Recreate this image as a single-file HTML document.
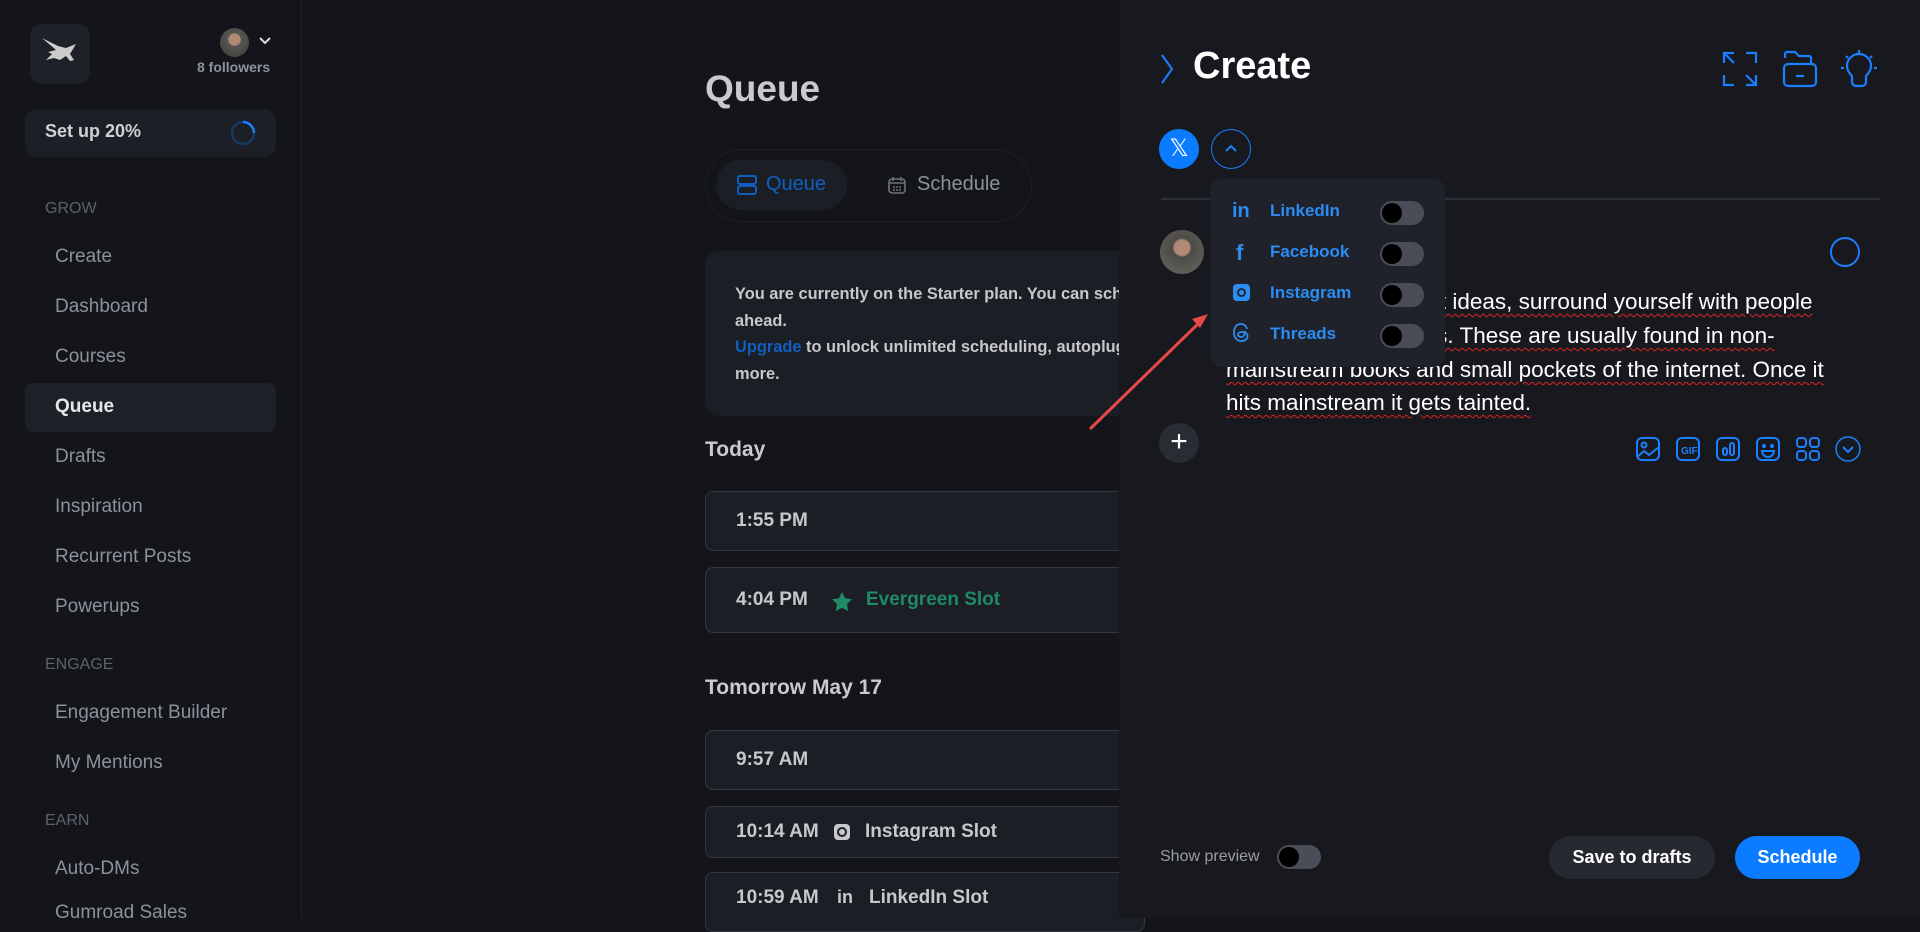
<!DOCTYPE html>
<html><head><meta charset="utf-8"><style>
*{box-sizing:border-box;margin:0;padding:0}
body{width:1920px;height:918px;overflow:hidden;background:#13151b;font-family:"Liberation Sans",sans-serif;position:relative;color:#c9cacd}
.abs{position:absolute}
.nav{position:absolute;left:55px;font-size:19px;color:#8d9199}
.sec{position:absolute;left:45px;font-size:16px;color:#5d616a}
.row{position:absolute;left:705px;width:440px;border:1px solid #34373f;border-radius:8px;background:#1c1e25}
.row span{position:absolute;left:30px;font-size:19px;font-weight:bold;color:#c7c8cb}
.tg{position:absolute;width:44px;height:24px;border-radius:12px;background:#4a4d58}
.tg:before{content:"";position:absolute;left:2px;top:2px;width:20px;height:20px;border-radius:50%;background:#000}
.dd{position:absolute;left:60px;font-size:17px;font-weight:bold;color:#2b8df2}
.ic{position:absolute;font-weight:bold;color:#2b8df2}
.pt{position:absolute;left:1226px;font-size:22.5px;color:#fff;text-decoration:underline wavy #d22;text-underline-offset:4px;text-decoration-thickness:1px;white-space:nowrap}
</style></head><body>
<!-- sidebar -->
<div class="abs" style="left:0;top:0;width:302px;height:918px;background:#13151b;border-right:1px solid #1f2128"></div>
<div class="abs" style="left:30px;top:24px;width:60px;height:60px;border-radius:12px;background:#1f2128"></div>
<svg class="abs" style="left:40px;top:34px" width="40" height="40" viewBox="0 0 40 40"><path d="M2 4 L18 12 L26 14 L36 10 L30 20 L34 26 L30 27 L26 22 L20 26 L14 24 L6 26 L12 20 L8 18 L16 16 Z" fill="#ccc"/></svg>
<div class="abs" style="left:220px;top:28px;width:29px;height:29px;border-radius:50%;background:radial-gradient(circle at 50% 40%,#b08a74 0 25%,#555 30%,#3b3b33 100%)"></div>
<svg class="abs" style="left:259px;top:37px" width="12" height="8"><path d="M1 1l5 5 5-5" stroke="#ddd" stroke-width="2" fill="none"/></svg>
<div class="abs" style="left:197px;top:59px;font-size:14px;font-weight:bold;color:#8d9199">8 followers</div>
<div class="abs" style="left:25px;top:109px;width:251px;height:48px;border-radius:12px;background:#1d1f26"></div>
<div class="abs" style="left:45px;top:121px;font-size:18px;font-weight:bold;color:#d0d1d4">Set up 20%</div>
<svg class="abs" style="left:230px;top:120px" width="26" height="26"><circle cx="13" cy="13" r="11" stroke="#163a66" stroke-width="2.5" fill="none"/><path d="M13 2 A11 11 0 0 1 24 13" stroke="#1a7fff" stroke-width="2.5" fill="none"/></svg>
<div class="sec" style="top:200px">GROW</div>
<div class="nav" style="top:246px">Create</div>
<div class="nav" style="top:296px">Dashboard</div>
<div class="nav" style="top:346px">Courses</div>
<div class="abs" style="left:25px;top:383px;width:251px;height:49px;border-radius:8px;background:#1f2128"></div>
<div class="nav" style="top:396px;color:#e6e7e9;font-weight:bold">Queue</div>
<div class="nav" style="top:446px">Drafts</div>
<div class="nav" style="top:496px">Inspiration</div>
<div class="nav" style="top:546px">Recurrent Posts</div>
<div class="nav" style="top:596px">Powerups</div>
<div class="sec" style="top:656px">ENGAGE</div>
<div class="nav" style="top:702px">Engagement Builder</div>
<div class="nav" style="top:752px">My Mentions</div>
<div class="sec" style="top:812px">EARN</div>
<div class="nav" style="top:858px">Auto-DMs</div>
<div class="nav" style="top:902px">Gumroad Sales</div>
<!-- main -->
<div class="abs" style="left:705px;top:68px;font-size:37px;font-weight:bold;color:#c9cacd">Queue</div>
<div class="abs" style="left:705px;top:149px;width:327px;height:73px;border-radius:37px;border:1px solid #1f2128"></div>
<div class="abs" style="left:716px;top:160px;width:131px;height:50px;border-radius:25px;background:#1c1e25"></div>
<svg class="abs" style="left:737px;top:175px" width="20" height="20"><rect x="1" y="1" width="18" height="8" rx="2" stroke="#0f5fc0" stroke-width="2" fill="none"/><rect x="1" y="11" width="18" height="8" rx="2" stroke="#0f5fc0" stroke-width="2" fill="none"/></svg>
<div class="abs" style="left:766px;top:173px;font-size:20px;color:#0f5fc0">Queue</div>
<svg class="abs" style="left:888px;top:176px" width="18" height="18"><rect x="1" y="3" width="16" height="14" rx="3" stroke="#6e727a" stroke-width="1.6" fill="none"/><path d="M5 1v4M13 1v4M1 7h16" stroke="#6e727a" stroke-width="1.6"/><path d="M5 11h8M5 14h8" stroke="#6e727a" stroke-width="1.6" stroke-dasharray="2 1"/></svg>
<div class="abs" style="left:917px;top:173px;font-size:20px;color:#8d9199">Schedule</div>
<div class="abs" style="left:705px;top:251px;width:440px;height:165px;border-radius:14px;background:#1c1e25"></div>
<div class="abs" style="left:735px;top:281px;font-size:16.4px;font-weight:bold;line-height:26.5px;color:#c7c8cb;white-space:nowrap">You are currently on the Starter plan. You can schedule posts<br>ahead.<br><span style="color:#0f5fc0">Upgrade</span> to unlock unlimited scheduling, autoplugs and<br>more.</div>
<div class="abs" style="left:705px;top:438px;font-size:21px;font-weight:bold;color:#c9cacd">Today</div>
<div class="row" style="top:491px;height:60px"><span style="top:18px">1:55 PM</span></div>
<div class="row" style="top:567px;height:66px"><span style="top:21px">4:04 PM</span>
<svg class="abs" style="left:125px;top:23px" width="22" height="21" viewBox="0 0 24 23"><path d="M12 1l3.4 7 7.6 1-5.5 5.3 1.3 7.6L12 18.3 5.2 21.9l1.3-7.6L1 9l7.6-1z" fill="#1f8a66"/></svg>
<span style="left:160px;top:21px;color:#1f8a66">Evergreen Slot</span></div>
<div class="abs" style="left:705px;top:676px;font-size:21px;font-weight:bold;color:#c9cacd">Tomorrow May 17</div>
<div class="row" style="top:730px;height:60px"><span style="top:18px">9:57 AM</span></div>
<div class="row" style="top:806px;height:52px"><span style="top:14px">10:14 AM</span>
<svg class="abs" style="left:127px;top:16px" width="18" height="18"><rect x="1" y="1" width="16" height="16" rx="4" fill="#c7c8cb"/><circle cx="9" cy="9" r="4" stroke="#1c1e25" stroke-width="2" fill="none"/></svg>
<span style="left:159px;top:14px">Instagram Slot</span></div>
<div class="row" style="top:872px;height:60px"><span style="top:14px">10:59 AM</span>
<span style="left:131px;top:14px;font-size:18px">in</span><span style="left:163px;top:14px">LinkedIn Slot</span></div>
<!-- panel -->
<div class="abs" style="left:1119px;top:0;width:801px;height:918px;background:#18191e"></div>
<svg class="abs" style="left:1160px;top:53px" width="14" height="32"><path d="M2 2l10 14L2 30" stroke="#1a7fff" stroke-width="2" fill="none"/></svg>
<div class="abs" style="left:1193px;top:45px;font-size:38px;font-weight:bold;color:#fff">Create</div>
<svg class="abs" style="left:1722px;top:51px" width="36" height="36" viewBox="0 0 36 36" fill="none" stroke="#1a7fff" stroke-width="2.2"><path d="M2 12V2h10M2 2l10 10M24 2h10v10M2 24v10h10M34 24v10H24M34 34L24 24"/></svg>
<svg class="abs" style="left:1782px;top:50px" width="36" height="38" viewBox="0 0 36 38" fill="none" stroke="#1a7fff" stroke-width="2.2"><path d="M3 8V4a2 2 0 0 1 2-2h8l4 4h10a2 2 0 0 1 2 2v6"/><rect x="2" y="14" width="32" height="22" rx="4"/><path d="M14 26h8"/></svg>
<svg class="abs" style="left:1840px;top:48px" width="38" height="40" viewBox="0 0 38 40" fill="none" stroke="#1a7fff" stroke-width="2.2"><path d="M19 2v3M6 8l2 2M32 8l-2 2M1 20h3M34 20h3"/><path d="M12 28c-3-3-5-6-5-10a12 12 0 0 1 24 0c0 4-2 7-5 10v6a4 4 0 0 1-4 4h-6a4 4 0 0 1-4-4z"/></svg>
<div class="abs" style="left:1159px;top:129px;width:40px;height:40px;border-radius:50%;background:#0b7bff;color:#fff;font-size:24px;text-align:center;line-height:40px">𝕏</div>
<div class="abs" style="left:1211px;top:129px;width:40px;height:40px;border-radius:50%;border:1.5px solid #1a7fff"></div>
<svg class="abs" style="left:1224px;top:144px" width="14" height="9"><path d="M2 7l5-5 5 5" stroke="#1a7fff" stroke-width="2" fill="none"/></svg>
<div class="abs" style="left:1161px;top:198px;width:719px;height:2px;background:#2d2f36"></div>
<div class="abs" style="left:1160px;top:230px;width:44px;height:44px;border-radius:50%;background:radial-gradient(circle at 50% 40%,#b08a74 0 22%,#4b4a44 28%,#6a6a66 100%)"></div>
<div class="abs" style="left:1830px;top:237px;width:30px;height:30px;border-radius:50%;border:2px solid #1a7fff"></div>
<div class="pt" style="top:289px">To come up with great ideas, surround yourself with people</div>
<div class="pt" style="top:323px">who share great ideas. These are usually found in non-</div>
<div class="pt" style="top:357px">mainstream books and small pockets of the internet. Once it</div>
<div class="pt" style="top:390px">hits mainstream it gets tainted.</div>
<div class="abs" style="left:1159px;top:423px;width:40px;height:40px;border-radius:50%;background:#2a2c33;color:#fff;font-size:30px;text-align:center;line-height:38px">+</div>
<svg class="abs" style="left:1636px;top:436px" width="226" height="26" viewBox="0 0 226 26" fill="none" stroke="#1a7fff" stroke-width="2">
<rect x="1" y="2" width="22" height="22" rx="5"/><circle cx="8" cy="9" r="2.5"/><path d="M1 21l7-6 5 4 10-8"/>
<rect x="41" y="2" width="22" height="22" rx="5"/><text x="45" y="18" font-size="10" font-weight="bold" fill="#1a7fff" stroke="none" font-family="Liberation Sans">GIF</text>
<rect x="81" y="2" width="22" height="22" rx="5"/><rect x="87" y="12" width="4" height="7" rx="2"/><rect x="94" y="7" width="4" height="12" rx="2"/>
<rect x="121" y="2" width="22" height="22" rx="5"/><circle cx="128" cy="10" r="1" fill="#1a7fff"/><circle cx="136" cy="10" r="1" fill="#1a7fff"/><path d="M126 15h12a6 6 0 0 1-12 0z"/>
<rect x="161" y="2" width="9" height="9" rx="3"/><rect x="174" y="2" width="9" height="9" rx="3"/><rect x="161" y="15" width="9" height="9" rx="3"/><rect x="174" y="15" width="9" height="9" rx="3"/>
<circle cx="212" cy="13" r="12" stroke-width="1.5"/><path d="M207 11l5 5 5-5"/></svg>
<!-- arrow -->
<svg class="abs" style="left:1080px;top:300px" width="140" height="140"><path d="M10 129L122 20" stroke="#e84848" stroke-width="3"/><path d="M128 14l-16 5 8 9z" fill="#e84848"/></svg>
<!-- dropdown -->
<div class="abs" style="left:1210px;top:179px;width:235px;height:188px;border-radius:12px;background:#1f222b">
<div class="ic" style="left:22px;top:21px;font-size:20px">in</div><div class="dd" style="top:22px">LinkedIn</div><div class="tg" style="left:170px;top:22px"></div>
<div class="ic" style="left:26px;top:61px;font-size:22px">f</div><div class="dd" style="top:63px">Facebook</div><div class="tg" style="left:170px;top:63px"></div>
<svg class="abs" style="left:23px;top:105px" width="17" height="17"><rect x="0" y="0" width="17" height="17" rx="4" fill="#2b8df2"/><circle cx="8.5" cy="8.5" r="3.5" stroke="#1f222b" stroke-width="1.8" fill="none"/></svg><div class="dd" style="top:104px">Instagram</div><div class="tg" style="left:170px;top:104px"></div>
<svg class="abs" style="left:22px;top:143px" width="19" height="21" viewBox="0 0 19 21"><path d="M15 7C14 3 11 2 9 2 5 2 2 5 2 10.5S5 19 9.5 19c3.5 0 6-2 6-5s-3-4-6-4c-2.5 0-3.5 1.5-3.5 2.5S7 15 9 15c3 0 4-3 4-6" stroke="#2b8df2" stroke-width="1.8" fill="none"/></svg><div class="dd" style="top:145px">Threads</div><div class="tg" style="left:170px;top:145px"></div>
</div>
<!-- bottom -->
<div class="abs" style="left:1160px;top:848px;font-size:16px;color:#9a9da4">Show preview</div>
<div class="tg" style="left:1277px;top:845px"></div>
<div class="abs" style="left:1549px;top:836px;width:166px;height:43px;border-radius:22px;background:#272930;color:#fff;font-size:18px;font-weight:bold;text-align:center;line-height:43px">Save to drafts</div>
<div class="abs" style="left:1735px;top:836px;width:125px;height:43px;border-radius:22px;background:#0b7bff;color:#fff;font-size:18px;font-weight:bold;text-align:center;line-height:43px">Schedule</div>
</body></html>
